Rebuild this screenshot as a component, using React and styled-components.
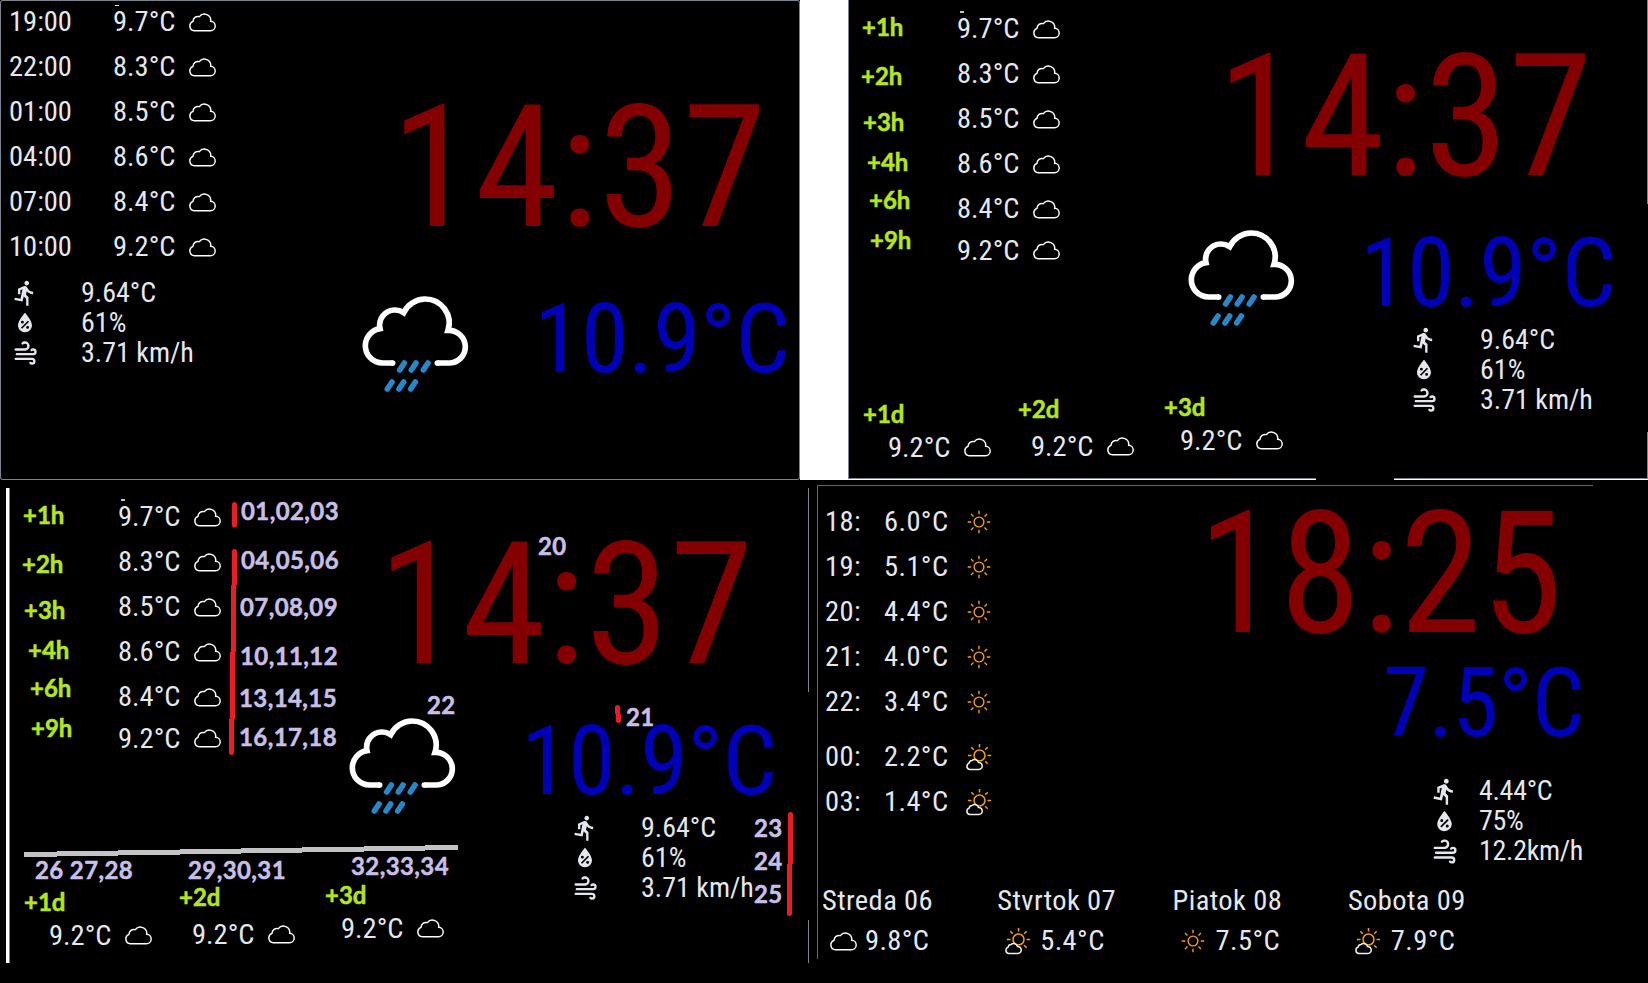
import React from "react";
import styled, { createGlobalStyle } from "styled-components";

const Global = createGlobalStyle`
  html, body { margin: 0; padding: 0; background: #000; }
  * { box-sizing: border-box; }
`;

const condensed = `"Roboto Condensed", Roboto, "Liberation Sans", sans-serif`;
const marker = `Lato, "Open Sans", sans-serif`;

const Page = styled.main`
  width: 1648px;
  height: 983px;
  overflow: hidden;
  background: #000;
  display: flex;
  flex-direction: column;
  position: relative;
`;
const TopRow = styled.section`
  display: flex;
  height: 480px;
  flex: none;
`;
const Gutter = styled.div`
  width: 48px;
  background: #fff;
`;
const BottomRow = styled.section`
  display: flex;
  align-items: flex-start;
  height: 503px;
`;
const Screen = styled.article`
  display: flex;
  width: 800px;
  height: ${(p) => p.$h || 480}px;
  flex: none;
  position: relative;
  background: #000;
`;
const FramedScreen = styled(Screen)`
  box-shadow: inset 0 0 0 1px #7b8290;
  border-radius: 3px;
`;
const SideBar = styled.div`
  width: 3px;
  height: 475px;
  margin: 8px 0 0 6px;
  background: #fff;
  flex: none;
`;
const Edge = styled.i`
  position: absolute;
  background: ${(p) => p.$c || "#7b8290"};
  left: ${(p) => p.$x}px;
  top: ${(p) => p.$y}px;
  width: ${(p) => p.$w}px;
  height: ${(p) => p.$h}px;
`;

const Column = styled.div`
  display: flex;
  flex-direction: column;
  flex: none;
  width: ${(p) => p.$w}px;
  padding-top: ${(p) => p.$top || 0}px;
`;
const Line = styled.div`
  display: flex;
  flex: none;
`;
const Value = styled.span`
  display: block;
  flex: none;
  width: ${(p) => p.$w || 75}px;
  font: 400 ${(p) => p.$size || 28}px/${(p) => p.$lh || 30}px ${condensed};
  font-stretch: 75%;
  letter-spacing: ${(p) => p.$ls || 0}px;
  color: ${(p) => p.$c || "#e5e7ee"};
  white-space: pre;
`;
const HourValue = styled(Value).attrs({ $size: 28.5 })`
  padding-top: 1px;
`;
const Clock = styled(Value).attrs({ $size: 170, $lh: 170, $c: "#840000", $w: 380 })`
  margin-left: ${(p) => p.$ml}px;
  transform: scaleX(${(p) => p.$stretch || 1});
  transform-origin: left;
`;
const Degrees = styled(Value).attrs({ $size: 96.5, $lh: 96, $c: "#0000b8", $w: 260, $ls: -0.6 })`
  margin: ${(p) => p.$mt}px 0 0 ${(p) => p.$ml}px;
  transform: scaleX(${(p) => p.$stretch || 1});
  transform-origin: left;
`;
const HourRow = styled.div`
  display: flex;
  align-items: center;
  flex: none;
  height: ${(p) => p.$h || 45}px;
  padding-left: ${(p) => p.$pl || 0}px;
  margin-top: ${(p) => p.$mt || 0}px;
`;
const Tag = styled.span`
  display: block;
  font: 700 24px/24px ${marker};
  -webkit-text-stroke: 0.5px #b5e61d;
  color: #b5e61d;
  margin-top: ${(p) => p.$mt || 0}px;
  padding-left: ${(p) => p.$pl || 0}px;
  white-space: pre;
`;
const Hero = styled.div`
  display: flex;
  align-items: flex-start;
  height: ${(p) => p.$h}px;
`;
const CloudBox = styled.div`
  width: 111px;
  flex: none;
  margin: ${(p) => p.$mt}px 0 0 19px;
`;
const MetricList = styled.div`
  margin: ${(p) => p.$mt || 0}px 0 0 ${(p) => p.$ml}px;
`;
const Metric = styled.div`
  display: flex;
  align-items: center;
  height: 30px;
  gap: ${(p) => p.$gap}px;
`;
const DayCell = styled.div`
  flex: none;
  width: ${(p) => p.$w}px;
  padding-top: ${(p) => p.$pt || 0}px;
`;
const DayLine = styled.div`
  display: flex;
  align-items: center;
  height: 30px;
  margin-top: ${(p) => p.$mt || 0}px;
  padding-left: ${(p) => p.$pl || 0}px;
`;
const IconSlot = styled.div`
  display: flex;
  justify-content: center;
  width: ${(p) => p.$w}px;
  flex: none;
`;
const Note = styled.span`
  position: absolute;
  left: ${(p) => p.$x}px;
  top: ${(p) => p.$y - 21}px;
  font: 700 24px/24px ${marker};
  letter-spacing: 0.4px;
  -webkit-text-stroke: 0.5px #c8bfe7;
  color: #c8bfe7;
  white-space: pre;
`;
const Ink = styled.svg`
  position: absolute;
  left: 0;
  top: 0;
  pointer-events: none;
`;
const Icon = styled.svg`
  display: block;
  flex: none;
`;

const CloudIcon = () => (
  <Icon width="28" height="20" viewBox="565 34 84 60" fill="none" stroke="#fff" strokeWidth="4.4">
    <path d="M584 90A14.500 14.500 0 0 1 580 62A15 15 0 0 1 599 48A19 19 0 0 1 633 62A14 14 0 0 1 632 90Z" />
  </Icon>
);
const RainCloud = () => (
  <Icon width="109.330" height="101.330" viewBox="64 640 328 304" fill="none" strokeWidth="17">
    <g stroke="#fff">
      <path d="M160 850H129A52 52 0 0 1 77 797A52 52 0 0 1 121 747A46 46 0 0 1 165 691A46 46 0 0 1 192 699A72 72 0 0 1 256 658A72 72 0 0 1 325 752A50 50 0 0 1 377 800A49 49 0 0 1 331 850H293" />
      <path d="M159 850H158M294 850H293" strokeLinecap="round" />
    </g>
    <path
      stroke="#2688c9"
      strokeLinecap="round"
      d="M194 850L180 871M229 850L215 871M265 850L251 871M157 907L143 928M192 907L178 928M227 907L213 928"
    />
  </Icon>
);
const rays = (cx, cy, a, b) =>
  [0, 45, 90, 135, 180, 225, 270, 315]
    .map((d) => {
      const r = (d * Math.PI) / 180;
      const c = Math.cos(r);
      const s = Math.sin(r);
      return `M${(cx + a * c).toFixed(1)} ${(cy + a * s).toFixed(1)}L${(cx + b * c).toFixed(1)} ${(cy + b * s).toFixed(1)}`;
    })
    .join("");
const SunIcon = () => (
  <Icon width="24" height="24" viewBox="0 0 24 24" fill="none" stroke="#f59e0b" strokeWidth="1.4">
    <circle cx="12" cy="12" r="4.900" />
    <path d={rays(12, 12, 7.8, 11.3)} />
  </Icon>
);
const PartlyIcon = () => (
  <Icon width="28" height="28" viewBox="1 0 28 28" fill="none" strokeWidth="1.500">
    <g stroke="#f59e0b">
      <circle cx="15.500" cy="12.500" r="5.500" />
      <path d={rays(15.5, 12.5, 8, 11.6)} />
    </g>
    <path
      fill="#000"
      stroke="#f1f1f1"
      d="M5.500 26.500A3.400 3.400 0 0 1 5.200 20A3 3 0 0 1 8 17.500A4 4 0 0 1 14.500 19.500A3.500 3.500 0 0 1 15 26.500Z"
    />
  </Icon>
);
const glyphs = {
  run: "M13.49,5.48C14.59,5.48 15.49,4.58 15.49,3.48C15.49,2.38 14.59,1.48 13.49,1.48C12.39,1.48 11.49,2.38 11.49,3.48C11.49,4.58 12.39,5.48 13.49,5.48M9.89,19.38L10.89,14.98L12.99,16.98V22.98H14.99V15.48L12.89,13.48L13.49,10.48C14.79,11.98 16.79,12.98 18.99,12.98V10.98C17.09,10.98 15.49,9.98 14.69,8.58L13.69,6.98C13.29,6.38 12.69,5.98 11.99,5.98C11.69,5.98 11.49,6.08 11.19,6.08L5.99,8.28V12.98H7.99V9.58L9.79,8.88L8.19,16.98L3.29,15.98L2.89,17.98L9.89,19.38Z",
  humidity:
    "M12,3.25C12,3.25 6,10 6,14C6,17.32 8.69,20 12,20A6,6 0 0,0 18,14C18,10 12,3.25 12,3.25M14.47,9.97L15.53,11.03L9.53,17.03L8.47,15.97M9.75,10A1.25,1.25 0 0,1 11,11.25A1.25,1.25 0 0,1 9.75,12.5A1.25,1.25 0 0,1 8.5,11.25A1.25,1.25 0 0,1 9.75,10M14.25,14.5A1.25,1.25 0 0,1 15.5,15.75A1.25,1.25 0 0,1 14.25,17A1.25,1.25 0 0,1 13,15.75A1.25,1.25 0 0,1 14.25,14.5Z",
  wind: "M4,10A1,1 0 0,1 3,9A1,1 0 0,1 4,8H12A2,2 0 0,0 14,6A2,2 0 0,0 12,4C11.45,4 10.95,4.22 10.59,4.59C10.2,5 9.56,5 9.17,4.59C8.78,4.2 8.78,3.56 9.17,3.17C9.9,2.45 10.9,2 12,2A4,4 0 0,1 16,6A4,4 0 0,1 12,10H4M19,12A1,1 0 0,0 20,11A1,1 0 0,0 19,10C18.72,10 18.47,10.11 18.29,10.29C17.9,10.68 17.27,10.68 16.88,10.29C16.5,9.9 16.5,9.27 16.88,8.88C17.42,8.34 18.17,8 19,8A3,3 0 0,1 22,11A3,3 0 0,1 19,14H5A1,1 0 0,1 4,13A1,1 0 0,1 5,12H19M18,18H4A1,1 0 0,1 3,17A1,1 0 0,1 4,16H18A3,3 0 0,1 21,19A3,3 0 0,1 18,22C17.17,22 16.42,21.66 15.88,21.12C15.5,20.73 15.5,20.1 15.88,19.71C16.27,19.32 16.9,19.32 17.29,19.71C17.47,19.89 17.72,20 18,20A1,1 0 0,0 19,19A1,1 0 0,0 18,18Z",
};
const Glyph = ({ name, size = 28 }) => (
  <Icon width={size} height={size} viewBox="0 0 24 24" fill="#e5e7ee" fillRule="evenodd">
    <path d={glyphs[name]} />
  </Icon>
);

const Metrics = ({ items, gap = 42, size, spacing, ...rest }) => (
  <MetricList {...rest}>
    {["run", "humidity", "wind"].map((name, i) => (
      <Metric key={name} $gap={gap}>
        <Glyph name={name} size={size} />
        <Value $w={130} $ls={spacing}>{items[i]}</Value>
      </Metric>
    ))}
  </MetricList>
);
const nowMetrics = ["9.64°C", "61%", "3.71 km/h"];

const temps = ["9.7°C", "8.3°C", "8.5°C", "8.6°C", "8.4°C", "9.2°C"];
const hours = ["19:00", "22:00", "01:00", "04:00", "07:00", "10:00"];

const Current = ({ top, cloudTop, degTop, heroH, metrics }) => (
  <Column $w={458} $top={top}>
    <Clock $ml={49}>14:37</Clock>
    <Hero $h={heroH}>
      <CloudBox $mt={cloudTop}>
        <RainCloud />
      </CloudBox>
      <Degrees $ml={62} $mt={degTop}>10.9°C</Degrees>
    </Hero>
    {metrics && <Metrics $ml={242} items={nowMetrics} />}
  </Column>
);

const ClassicScreen = () => (
  <FramedScreen>
    <Edge $x={115} $y={5} $w={4} $h={1} $c="#e5e7ee" />
    <Column $w={342}>
      {temps.map((t, i) => (
        <HourRow key={i} $pl={9} $mt={i === 0 ? -1 : 0}>
          <HourValue $w={104}>{hours[i]}</HourValue>
          <HourValue>{t}</HourValue>
          <CloudIcon />
        </HourRow>
      ))}
      <Metrics $mt={9} $ml={11} items={nowMetrics} />
    </Column>
    <Current top={83} cloudTop={40} degTop={38} heroH={150} />
  </FramedScreen>
);

const tags = [
  ["+1h", 15, 14],
  ["+2h", 25, 13],
  ["+3h", 22, 15],
  ["+4h", 16, 19],
  ["+6h", 14, 21],
  ["+9h", 16, 22],
];
const OffsetContent = () => (
  <>
    <Edge $x={112} $y={11} $w={4} $h={2} $c="#c5c7ce" />
    <Column $w={320}>
      <Line>
        <Column $w={109}>
          {tags.map(([t, mt, pl]) => (
            <Tag key={t} $mt={mt} $pl={pl}>{t}</Tag>
          ))}
        </Column>
        <Column $w={210} $top={6}>
          {temps.map((t, i) => (
            <HourRow key={i} $mt={i === 5 ? -4 : 0} $h={i === 5 ? 46 : 45}>
              <HourValue>{t}</HourValue>
              <CloudIcon />
            </HourRow>
          ))}
        </Column>
      </Line>
      <Line>
        <DayCell $w={155} $pt={129}>
          <Tag $pl={15}>+1d</Tag>
          <DayLine $mt={6} $pl={40}><HourValue>9.2°C</HourValue><CloudIcon /></DayLine>
        </DayCell>
        <DayCell $w={146} $pt={124}>
          <Tag $pl={15}>+2d</Tag>
          <DayLine $mt={10} $pl={28}><HourValue>9.2°C</HourValue><CloudIcon /></DayLine>
        </DayCell>
        <DayCell $w={146} $pt={122}>
          <Tag $pl={15}>+3d</Tag>
          <DayLine $mt={6} $pl={31}><HourValue>9.2°C</HourValue><CloudIcon /></DayLine>
        </DayCell>
      </Line>
    </Column>
    <Current top={32} cloudTop={25} degTop={23} heroH={123} metrics />
  </>
);

const notes = [
  ["01,02,03", 241, 520], ["04,05,06", 241, 569], ["07,08,09", 240, 616],
  ["10,11,12", 240, 665], ["13,14,15", 239, 707], ["16,17,18", 239, 746],
  ["20", 538, 555], ["22", 427, 714], ["21", 626, 726],
  ["23", 754, 837], ["24", 754, 870], ["25", 754, 903],
  ["26 27,28", 35, 879], ["29,30,31", 188, 879], ["32,33,34", 351, 875],
];
const Annotations = () => (
  <>
    <Ink width="1648" height="983" viewBox="0 0 1648 983" fill="none" strokeWidth="5">
      <path stroke="#ed1c24" strokeLinecap="round" d="M234.500 504.500V525M234.500 551.500V583M233.500 587V650M232.500 654V717M231.500 721V752.500M617.500 707.500V712M618.500 716V720.500M790.500 814.500V861M789.500 866V913.500" />
      <path stroke="#ed1c24" d="M234.500 580V585M233.500 585V652M232.500 652V719M231.500 719V724M617.500 710V714M618.500 714V718M790.500 860V864M789.500 864V868" />
      <path stroke="#c3c3c3" d="M24 854.500H57M57 853.500H118M118 852.500H180M180 851.500H241M241 850.500H302M302 849.500H364M364 848.500H425M425 847.500H458" />
    </Ink>
    {notes.map(([t, x, y]) => (
      <Note key={t} $x={x} $y={y}>{t}</Note>
    ))}
  </>
);

const localHours = [
  ["18:", "6.0°C", "sun"], ["19:", "5.1°C", "sun"], ["20:", "4.4°C", "sun"],
  ["21:", "4.0°C", "sun"], ["22:", "3.4°C", "sun"], ["00:", "2.2°C", "partly"], ["03:", "1.4°C", "partly"],
];
const icons = { sun: SunIcon, partly: PartlyIcon, cloud: CloudIcon };
const localDays = [
  ["Streda 06", "9.8°C", "cloud"], ["Stvrtok 07", "5.4°C", "partly"],
  ["Piatok 08", "7.5°C", "sun"], ["Sobota 09", "7.9°C", "partly"],
];
const LocalScreen = styled.article`
  width: 776px;
  height: 474px;
  margin: 5px 0 0 8px;
  border-top: 1px solid #63676f;
  border-left: 1px solid #63676f;
  padding-left: 4px;
`;
const LocalMain = styled.div`
  display: flex;
  height: 400px;
`;
const LocalScreenView = () => (
  <LocalScreen>
    <LocalMain>
      <Column $w={340} $top={14}>
        {localHours.map(([h, t, icon], i) => {
          const Weather = icons[icon];
          return (
            <HourRow key={h} $h={44.8} $pl={3} $mt={i === 5 ? 10.5 : 0}>
              <Value $w={59} $size={28.5} $ls={0.4}>{h}</Value>
              <Value $w={76} $size={28.5} $ls={0.4}>{t}</Value>
              <IconSlot $w={38}><Weather /></IconSlot>
            </HourRow>
          );
        })}
      </Column>
      <Column $w={430} $top={3}>
        <Clock $ml={36} $stretch={0.972}>18:25</Clock>
        <Degrees $ml={221} $mt={-4} $stretch={0.966}>7.5°C</Degrees>
        <Metrics $mt={25} $ml={268} gap={20} size={29} spacing={-0.3} items={["4.44°C", "75%", "12.2km/h"]} />
      </Column>
    </LocalMain>
    <Line>
      {localDays.map(([d, t, icon]) => {
        const Weather = icons[icon];
        return (
          <DayCell key={d} $w={175.3}>
            <Value $w={150} $size={28.5} $ls={0.4}>{d}</Value>
            <DayLine $mt={10} $pl={5}>
              <IconSlot $w={31}><Weather /></IconSlot>
              <Value $w={100} $size={28.5} $ls={0.4}>{" " + t}</Value>
            </DayLine>
          </DayCell>
        );
      })}
    </Line>
  </LocalScreen>
);

const OffsetScreen = styled(Screen)`
  margin-top: ${(p) => p.$mt || 0}px;
`;

export default function App() {
  return (
    <Page>
      <Global />
      <TopRow>
        <ClassicScreen />
        <Gutter />
        <OffsetScreen>
          <OffsetContent />
          <Edge $x={0} $y={0} $w={1} $h={478} />
          <Edge $x={0} $y={478} $w={468} $h={1} />
          <Edge $x={0} $y={479} $w={468} $h={1} $c="#fff" />
          <Edge $x={546} $y={478} $w={254} $h={1} />
          <Edge $x={546} $y={479} $w={254} $h={1} $c="#fff" />
          <Edge $x={799} $y={0} $w={1} $h={204} />
          <Edge $x={799} $y={432} $w={1} $h={46} />
        </OffsetScreen>
      </TopRow>
      <BottomRow>
        <SideBar />
        <OffsetScreen $mt={8} $h={475}>
          <OffsetContent />
          <Edge $x={0} $y={0} $w={1} $h={475} />
          <Edge $x={799} $y={0} $w={1} $h={204} />
          <Edge $x={799} $y={432} $w={1} $h={43} />
        </OffsetScreen>
        <LocalScreenView />
      </BottomRow>
      <Annotations />
    </Page>
  );
}
